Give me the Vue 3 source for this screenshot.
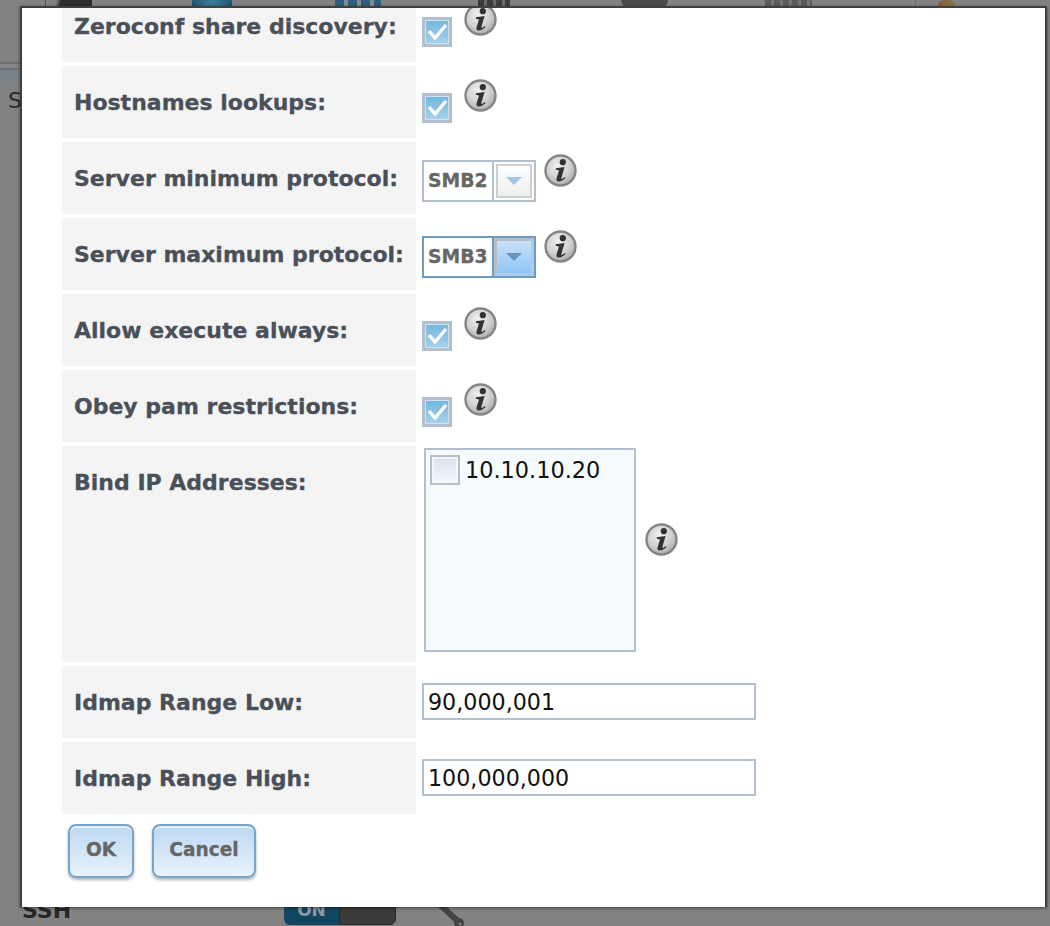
<template>
  <div class="page">
    <!-- dimmed page behind the dialog -->
    <div class="backdrop">
      <div class="top-icon dome-a"></div>
      <div class="top-icon teal"></div>
      <div class="top-icon blobs"></div>
      <div class="top-icon dots"></div>
      <div class="top-icon dome-b"></div>
      <div class="top-icon bars"></div>
      <div class="top-icon hairline"></div>
      <div class="top-icon tip"></div>
      <div class="rule"></div>
      <div class="side-s">S</div>
      <div class="ssh">SSH</div>
      <div class="toggle"><span class="toggle-on">ON</span><span class="toggle-off"></span></div>
      <svg class="wrench" width="34" height="24" viewBox="0 0 34 24">
        <path d="M6 0 L26 18" stroke="#444" stroke-width="6" fill="none" />
        <circle cx="26" cy="19" r="5" fill="#444" />
        <circle cx="27" cy="20" r="1.5" fill="#808080" />
      </svg>
    </div>

    <div class="dialog">
      <div class="rows">
        <div class="row" v-for="row in checkRowsTop" :key="row">
          <div class="label">{{ row }}</div>
          <div class="field check-field">
            <span class="checkbox">
              <svg width="22" height="20" viewBox="0 0 22 20"><path d="M3 9 L9 16 L20 3" fill="none" stroke="#fff" stroke-width="3.2" /></svg>
            </span>
            <svg class="info" viewBox="0 0 33 33"><use href="#info-icon" /></svg>
          </div>
        </div>

        <div class="row" v-for="s in selects" :key="s.value">
          <div class="label">{{ s.label }}</div>
          <div class="field select-field">
            <div class="select" :class="{ focused: s.focused }">
              <span class="select-value">{{ s.value }}</span>
              <span class="select-arrow"><i></i></span>
            </div>
            <svg class="info" viewBox="0 0 33 33"><use href="#info-icon" /></svg>
          </div>
        </div>

        <div class="row" v-for="row in checkRowsBottom" :key="row">
          <div class="label">{{ row }}</div>
          <div class="field check-field">
            <span class="checkbox">
              <svg width="22" height="20" viewBox="0 0 22 20"><path d="M3 9 L9 16 L20 3" fill="none" stroke="#fff" stroke-width="3.2" /></svg>
            </span>
            <svg class="info" viewBox="0 0 33 33"><use href="#info-icon" /></svg>
          </div>
        </div>

        <div class="row row-tall">
          <div class="label">Bind IP Addresses:</div>
          <div class="field list-field">
            <div class="listbox">
              <span class="checkbox empty"></span>
              <span class="list-text">10.10.10.20</span>
            </div>
            <svg class="info" viewBox="0 0 33 33"><use href="#info-icon" /></svg>
          </div>
        </div>

        <div class="row" v-for="r in inputs" :key="r.label">
          <div class="label">{{ r.label }}</div>
          <div class="field input-field">
            <input class="text-input" :value="r.value" readonly />
          </div>
        </div>
      </div>

      <div class="buttons">
        <button class="btn btn-ok">OK</button>
        <button class="btn btn-cancel">Cancel</button>
      </div>
    </div>

    <svg width="0" height="0" class="defs">
      <defs>
        <radialGradient id="info-fill" cx="0.42" cy="0.35" r="0.75">
          <stop offset="0" stop-color="#f2f2f2" />
          <stop offset="0.55" stop-color="#cfcfcf" />
          <stop offset="1" stop-color="#a0a0a0" />
        </radialGradient>
        <g id="info-icon">
          <circle cx="16.5" cy="16.5" r="15" fill="url(#info-fill)" stroke="#858585" stroke-width="2.4" />
          <circle cx="18.8" cy="8.2" r="3.1" fill="#333" />
          <path d="M11.8 14.3 L20.6 13 L17.5 23.6 Q17 25.4 18.4 24.7 L21 23 L21.4 24.2 Q17.2 27.9 14 27.4 Q11.9 27 12.6 24.2 L15 16.4 L11.8 15.8 Z" fill="#333" />
        </g>
      </defs>
    </svg>
  </div>
</template>

<script setup>
const checkRowsTop = ['Zeroconf share discovery:', 'Hostnames lookups:']
const checkRowsBottom = ['Allow execute always:', 'Obey pam restrictions:']

const selects = [
  { label: 'Server minimum protocol:', value: 'SMB2', focused: false },
  { label: 'Server maximum protocol:', value: 'SMB3', focused: true }
]

const inputs = [
  { label: 'Idmap Range Low:', value: '90,000,001' },
  { label: 'Idmap Range High:', value: '100,000,000' }
]
</script>

<style>
html, body {
  margin: 0;
  background: #808080;
}
</style>

<style scoped>
.page {
  position: relative;
  width: 1050px;
  height: 926px;
  overflow: hidden;
  background: #828282;
  font-family: "DejaVu Sans", Verdana, sans-serif;
}

.defs {
  position: absolute;
}

.top-icon {
  position: absolute;
  top: 0;
  height: 8px;
}

.dome-a {
  left: 45px;
  width: 47px;
  border-left: 1px solid #555;
  box-sizing: border-box;
  background: linear-gradient(105deg, transparent 22%, #2d2d2d 32%);
}

.teal {
  left: 192px;
  width: 40px;
  background: linear-gradient(90deg, #1f5570, #3a7d9c 50%, #1f5570);
}

.blobs {
  left: 335px;
  width: 46px;
  background: repeating-linear-gradient(90deg, #2c5f7d 0 9px, #7d8a90 9px 13px);
}

.dots {
  left: 478px;
  width: 32px;
  background: repeating-linear-gradient(90deg, #3c3c3c 0 6px, #6a6a6a 6px 9px);
}

.dome-b {
  left: 621px;
  width: 47px;
  border-radius: 0 0 14px 14px;
  background: #4a4a4a;
}

.bars {
  left: 765px;
  width: 47px;
  background: repeating-linear-gradient(90deg, #5c5c5c 0 6px, #767676 6px 9px);
}

.hairline {
  left: 915px;
  width: 1px;
  background: #6d6d6d;
}

.tip {
  left: 938px;
  width: 17px;
  height: 6px;
  border-radius: 8px 8px 0 0;
  background: linear-gradient(90deg, #8c5a3c, #7d7d4a);
}

.rule {
  position: absolute;
  left: 0;
  top: 62px;
  width: 22px;
  height: 26px;
  background: linear-gradient(#6f6f6f 0 2px, #858585 2px 6px, #6f6f6f 6px 8px, #74818c 8px, #828282 100%);
}

.side-s {
  position: absolute;
  left: 8px;
  top: 88px;
  font-size: 22px;
  color: #2a2a2a;
}

.ssh {
  position: absolute;
  left: 22px;
  top: 898px;
  font-size: 22px;
  font-weight: bold;
  color: #262626;
}

.toggle {
  position: absolute;
  left: 284px;
  top: 895px;
  width: 112px;
  height: 30px;
  display: flex;
  border-radius: 6px;
  overflow: hidden;
}

.toggle-on {
  width: 55px;
  background: #124560;
  color: #8b9aa4;
  font-size: 17px;
  font-weight: bold;
  text-align: center;
  line-height: 30px;
}

.toggle-off {
  flex: 1;
  box-sizing: border-box;
  background: #3a3a3a;
  border: 1px solid #2a2a2a;
}

.wrench {
  position: absolute;
  left: 433px;
  top: 904px;
}

.dialog {
  position: absolute;
  left: 20px;
  top: 6px;
  width: 1027px;
  height: 901px;
  box-sizing: border-box;
  background: #fff;
  border: 2px solid #404040;
  border-bottom-width: 0;
  box-shadow: 0 1px 3px rgba(0, 0, 0, 0.5);
  overflow: hidden;
  padding-left: 40px;
}

.rows {
  display: flex;
  flex-direction: column;
  gap: 4px;
  margin-top: -18px;
}

.row {
  display: flex;
  height: 72px;
}

.row-tall {
  height: 216px;
}

.label {
  width: 354px;
  box-sizing: border-box;
  flex: none;
  background: #f4f4f4;
  padding: 23px 0 0 12px;
  font-size: 22px;
  line-height: 28px;
  font-weight: bold;
  color: #4a5059;
  -webkit-text-stroke: 0.3px #4a5059;
  white-space: nowrap;
}

.field {
  display: flex;
  align-items: flex-start;
  padding-left: 6px;
}

.info {
  width: 33px;
  height: 33px;
  flex: none;
}

.check-field {
  gap: 12px;
  padding-top: 13px;
}

.checkbox {
  width: 30px;
  height: 30px;
  box-sizing: border-box;
  flex: none;
  margin-top: 14px;
  border: 3px solid #b3bfcd;
  background: linear-gradient(#72b6df, #a8d2ec);
  display: flex;
  align-items: center;
  justify-content: center;
  box-shadow: inset 0 0 0 1px #cfe3f1;
}

.checkbox.empty {
  margin-top: 0;
  background: linear-gradient(#d5e3ef, #f2f7fb);
  box-shadow: inset 0 0 0 2px #f4f8fb;
  border-width: 2px;
}

.select-field {
  gap: 8px;
  padding-top: 12px;
}

.select {
  margin-top: 6px;
  width: 114px;
  height: 42px;
  box-sizing: border-box;
  border: 2px solid #b3bfcd;
  display: flex;
  background: #fff;
}

.select-value {
  width: 70px;
  border-right: 2px solid #b3bfcd;
  box-sizing: border-box;
  font-size: 18.8px;
  font-weight: bold;
  color: #666;
  -webkit-text-stroke: 0.3px #666;
  line-height: 38px;
  padding-left: 4px;
}

.select-arrow {
  flex: 1;
  margin: 2px;
  border: 2px solid #cfcfcf;
  background: linear-gradient(#fff, #eeeeee);
  display: flex;
  align-items: center;
  justify-content: center;
}

.select-arrow i {
  width: 0;
  height: 0;
  border-left: 8px solid transparent;
  border-right: 8px solid transparent;
  border-top: 8px solid #a5c3e6;
}

.select.focused {
  border-color: #6e9cc0;
}

.select.focused .select-value {
  border-right-color: #6e9cc0;
}

.select.focused .select-arrow {
  margin: 0;
  border: 3px solid #b9bcc0;
  border-right-color: #a9cdef;
  border-bottom-color: #a9cdef;
  background: linear-gradient(#cbe2f8, #8fc4f5);
}

.select.focused .select-arrow i {
  border-top-color: #6a93bd;
}

.list-field {
  align-items: flex-start;
  gap: 9px;
  padding-left: 8px;
  padding-top: 2px;
}

.listbox {
  width: 212px;
  height: 204px;
  box-sizing: border-box;
  border: 2px solid #b3bfcd;
  background: #f6fbfe;
  padding: 5px 4px;
  display: flex;
  align-items: flex-start;
  gap: 5px;
}

.list-text {
  font-size: 22.4px;
  line-height: 30px;
  color: #111;
}

.list-field .info {
  margin-top: 75px;
}

.input-field {
  padding-top: 17px;
}

.text-input {
  width: 334px;
  height: 37px;
  box-sizing: border-box;
  border: 2px solid #b3bfcd;
  padding: 1px 4px 0;
  font-family: "DejaVu Sans", Verdana, sans-serif;
  font-size: 22.2px;
  color: #111;
  outline: none;
  background: #fff;
}

.buttons {
  display: flex;
  gap: 18px;
  margin: 10px 0 0 6px;
}

.btn {
  height: 54px;
  box-sizing: border-box;
  border: 2px solid #7aa4c6;
  border-radius: 8px;
  background: linear-gradient(#bcd8f0, #e8f3fd);
  box-shadow: inset 0 2px 0 #e2eefa, 0 2px 3px rgba(0, 0, 0, 0.3);
  font-family: "DejaVu Sans", Verdana, sans-serif;
  font-size: 18.6px;
  font-weight: bold;
  color: #666;
  -webkit-text-stroke: 0.3px #666;
  padding: 0 0 4px;
}

.btn-ok {
  width: 66px;
}

.btn-cancel {
  width: 104px;
}
</style>
